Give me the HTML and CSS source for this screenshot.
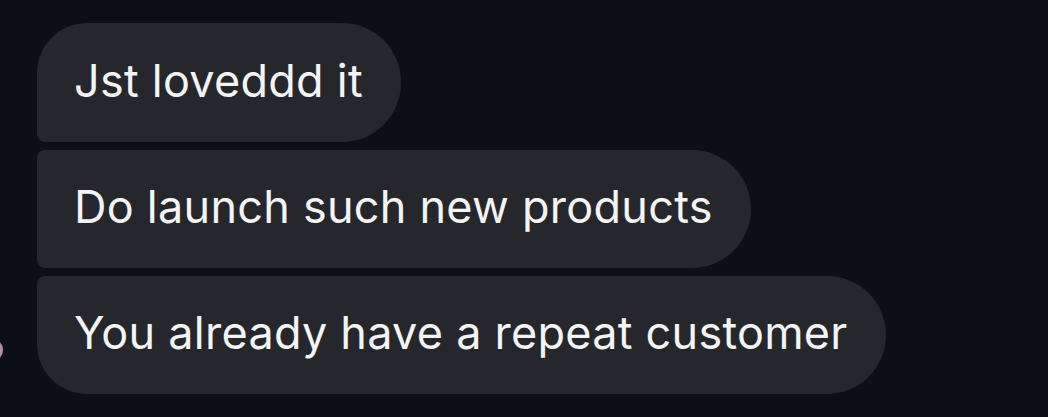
FILE: index.html
```html
<!DOCTYPE html>
<html>
<head>
    <title>Messages</title>
    <link rel="stylesheet" href="styles.css">
</head>
<body>
    <div class="thread">
        <div class="avatar"></div>
        <div class="group">
            <div class="bubble first">Jst loveddd it</div>
            <div class="bubble middle">Do launch such new products</div>
            <div class="bubble last">You already have a repeat customer</div>
        </div>
    </div>
</body>
</html>
```

FILE: styles.css
```css
body {
    margin: 0;
    padding: 0;
    background-color: #0c0f13;
    font-family: 'Inter', 'Roboto', sans-serif;
    overflow: hidden;
}
.thread {
    position: relative;
    padding: 23px 0 0 37px;
}
.group {
    display: flex;
    flex-direction: column;
    align-items: flex-start;
    gap: 8px;
}
.bubble {
    display: flex;
    align-items: center;
    height: 118px;
    padding: 0 38px 5px 37px;
    box-sizing: border-box;
    background-color: #25272c;
    color: #f4f4f5;
    font-size: 45px;
    letter-spacing: 0.25px;
    white-space: nowrap;
}
.first {
    height: 119px;
    border-radius: 50px 59px 59px 8px;
}
.middle {
    border-radius: 8px 59px 59px 8px;
}
.last {
    border-radius: 8px 59px 59px 50px;
}
.avatar {
    position: absolute;
    left: -21px;
    top: 338px;
    width: 24px;
    height: 24px;
    border-radius: 50%;
    background: linear-gradient(90deg, #3a2a36, #b894ad);
}
```
